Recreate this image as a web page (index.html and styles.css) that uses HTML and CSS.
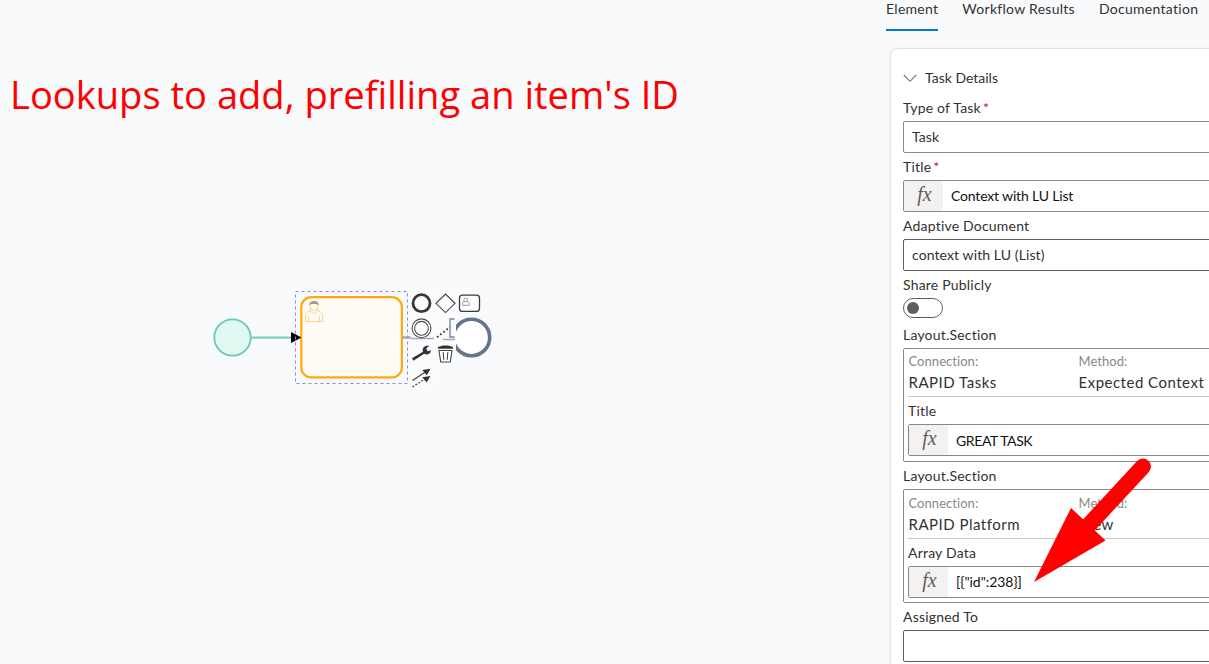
FILE: index.html
```html
<!DOCTYPE html>
<html lang="en">
<head>
<meta charset="utf-8">
<title>Workflow designer</title>
<link rel="stylesheet" href="styles.css">
</head>
<body>
<div class="app">
  <main class="canvas">
    <h1 class="headline">Lookups to add, prefilling an item's ID</h1>
    <svg class="diagram" width="300" height="110" viewBox="205 285 300 110">
      <circle cx="232.5" cy="337.5" r="18.2" fill="#e0f8f2" stroke="#68c9b5" stroke-width="1.8"/>
      <path d="M251 337.6H293" stroke="#7fd0c0" stroke-width="2.2"/>
      <path d="M401 337.5H460" stroke="#747d91" stroke-width="2"/>
      <rect x="301.3" y="297.2" width="100.6" height="80.2" rx="10" fill="#fffcf5" stroke="#ffa812" stroke-width="2.2"/>
      <path d="M291 332L301.500 337.500L291 343Z" fill="#000"/>
      <rect x="295.500" y="291.500" width="112" height="92" fill="none" stroke="#8c86f5" stroke-dasharray="3 3"/>
      <g fill="none" stroke="#ffd08a" stroke-width="1">
        <path d="M310.500 310.500C307 312 305.500 312.500 305.500 316V321.500H322.500V316C322.500 312.500 321 312 317.500 310.500C317 314 311 314 310.500 310.500ZM308.700 321.500V316M319.500 321.500V316M310.500 310.500V308.500M317.500 310.500V308.500"/>
        <circle cx="314" cy="305.800" r="4.300"/>
      </g>
      <path d="M309.300 305C309 299.600 319 299.600 318.700 305C317 303.800 312 303.300 309.300 305Z" fill="#a69883"/>
      <circle cx="471.500" cy="337.500" r="18.200" fill="#fff" stroke="#64748b" stroke-width="3.600"/>
      <path d="M410 292H434V389H410ZM434 292H480V314H456V363H434Z" fill="#fafbfd"/>
      <path d="M402 337.500H411M411 338.500H434M443 339.500H455" stroke="#a3a8b4" stroke-width="1.300"/>
      <circle cx="421.500" cy="303.200" r="8.500" fill="none" stroke="#373737" stroke-width="2.800"/>
      <path d="M445.500 294L455 303.300L445.500 312.600L436 303.300Z" fill="#fff" stroke="#414141" stroke-width="1.100"/>
      <rect x="459.500" y="295.200" width="20" height="16.200" rx="3" fill="#fdfdfd" stroke="#3c3c40" stroke-width="1.300"/>
      <path d="M464.200 301.500C462.500 302 462.300 303 462.300 305.300H469.300C469.300 303 469 302 467.300 301.500" fill="none" stroke="#85858b" stroke-width=".8"/>
      <circle cx="465.700" cy="300" r="1.900" fill="none" stroke="#85858b" stroke-width=".8"/>
      <circle cx="421.500" cy="328.300" r="9.400" fill="#fff" stroke="#49494d" stroke-width="1.100"/>
      <circle cx="421.500" cy="328.300" r="6.900" fill="#fff" stroke="#49494d" stroke-width="1.100"/>
      <path d="M437 337.200L450 327" stroke="#333" stroke-width="1.800" stroke-dasharray="1.700 2.300"/>
      <path d="M454.500 319H450V337H454.500" fill="none" stroke="#71819b" stroke-width="1.300"/>
      <path d="M412 358.200L423 351.800C421.600 347.800 425 344.800 429.200 345.900L426.300 348.200L427.500 351.200L431 350.200C430.500 354.500 426.700 355.300 424.200 353.800L413.500 360.800Z" fill="#333"/>
      <path d="M438 348.700V347L443 345.400H448L453 347V348.700Z" fill="#333"/>
      <path d="M439 350.500H452L450.300 362H440.700Z" fill="#fff" stroke="#444" stroke-width="1.100"/>
      <path d="M443.200 352.200L443.800 359.800M447.800 352.200L447.200 359.800" stroke="#444" stroke-width="1.100"/>
      <path d="M412.500 380.500L425 372.300" stroke="#444" stroke-width="1.200"/>
      <path d="M412.500 387L425 379" stroke="#444" stroke-width="1.200" stroke-dasharray="2 1.500"/>
      <path d="M430.500 368.700L426.700 375.200L422.300 369.900ZM430.500 376L426.700 382.500L422.300 377.200Z" fill="#333"/>
    </svg>
  </main>
  <aside class="side">
    <nav class="tabs">
      <a class="tab active">Element</a>
      <a class="tab">Workflow Results</a>
      <a class="tab">Documentation</a>
    </nav>
    <section class="card">
      <header class="card-head">
        <svg width="14" height="9" viewBox="0 0 14 9"><path d="M.8 1L7 7.300L13.200 1" fill="none" stroke="#777" stroke-width="1.100"/></svg>
        <span>Task Details</span>
      </header>
      <div class="label">Type of Task<span class="req">*</span></div>
      <div class="input">Task</div>
      <div class="label">Title<span class="req">*</span></div>
      <div class="input"><span class="fx">fx</span><span class="value">Context with LU List</span></div>
      <div class="label">Adaptive Document</div>
      <div class="input dark">context with LU (List)</div>
      <div class="label">Share Publicly</div>
      <div class="toggle"><span class="knob"></span></div>
      <div class="label">Layout.Section</div>
      <div class="box">
        <div class="meta">
          <div class="col"><span class="key">Connection:</span><span class="val">RAPID Tasks</span></div>
          <div class="col"><span class="key">Method:</span><span class="val">Expected Context</span></div>
        </div>
        <div class="label">Title</div>
        <div class="input"><span class="fx">fx</span><span class="value caps">GREAT TASK</span></div>
      </div>
      <div class="label">Layout.Section</div>
      <div class="box second">
        <div class="meta">
          <div class="col"><span class="key">Connection:</span><span class="val">RAPID Platform</span></div>
          <div class="col"><span class="key">Method:</span><span class="val">View</span></div>
        </div>
        <div class="label">Array Data</div>
        <div class="input"><span class="fx">fx</span><span class="value code">[{"id":238}]</span></div>
      </div>
      <div class="label">Assigned To</div>
      <div class="input dark"></div>
    </section>
  </aside>
  <svg class="arrow" width="130" height="135" viewBox="1025 455 130 135">
    <path d="M1143 466.500L1087 527" stroke="#f00" stroke-width="16" stroke-linecap="round"/>
    <path d="M1034 582L1071 508L1105.500 540.500Z" fill="#f00"/>
  </svg>
</div>
</body>
</html>
```

FILE: styles.css
```css
* { box-sizing: border-box; }
body {
  margin: 0;
  background: #f9fafc;
  color: #323130;
  font: 14px/20px Lato, "Liberation Sans", sans-serif;
}
.app { position: relative; display: flex; width: 1209px; height: 664px; overflow: hidden; }
.canvas { width: 886px; flex: none; display: flex; flex-direction: column; padding-top: 64px; }
.headline {
  margin: 0 0 0 10px;
  color: #f00;
  font: 400 39px/60px "Open Sans", "Noto Sans", sans-serif;
  white-space: nowrap;
  width: max-content;
  transform: scaleX(.977);
  transform-origin: left;
}
.diagram { margin: 161px 0 0 205px; display: block; }
.side { flex: none; width: 340px; }
.tabs { display: flex; gap: 24px; height: 31px; }
.tab { height: 31px; line-height: 17px; white-space: nowrap; letter-spacing: .28px; }
.active { border-bottom: 2px solid #0078d4; }
.card {
  margin: 17px 0 0 4px;
  height: 640px;
  padding: 15px 0 0 12px;
  background: #fff;
  border: 1px solid #e1e2e4;
  border-radius: 8px;
  box-shadow: 0 1px 4px rgba(0, 0, 0, .08);
}
.card-head { display: flex; align-items: center; gap: 8px; height: 28px; margin-bottom: 2px; line-height: 28px; }
.label { height: 27px; line-height: 27px; letter-spacing: .2px; white-space: nowrap; }
.req { color: #a4262c; margin-left: 2px; }
.input {
  display: flex;
  align-items: center;
  height: 32px;
  padding-left: 8px;
  border: 1px solid #8a8886;
  border-radius: 2px;
  background: #fff;
  letter-spacing: .1px;
}
.input:has(.fx) { padding-left: 0; }
.dark { border-color: #605e5c; }
.fx {
  width: 39px;
  height: 30px;
  padding-left: 2px;
  background: #f3f2f1;
  color: #605e5c;
  text-align: center;
  font: italic 20px/27px "Liberation Serif", serif;
}
.value { margin-left: 8px; color: #111; letter-spacing: -.17px; }
.caps { letter-spacing: -.4px; padding-top: 1px; }
.code { letter-spacing: -.05px; }
.toggle {
  display: flex;
  align-items: center;
  width: 40px;
  height: 20px;
  margin-bottom: 3px;
  padding-left: 3px;
  border: 1px solid #605e5c;
  border-radius: 10px;
}
.knob { width: 12px; height: 12px; border-radius: 50%; background: #605e5c; }
.box { height: 114px; padding: 3px 0 0 4px; border: 1px solid #8a8886; border-radius: 2px; }
.meta { display: flex; height: 45px; border-bottom: 1px solid #c8c6c4; }
.col { display: flex; flex-direction: column; width: 170px; padding-left: .5px; flex: none; white-space: nowrap; }
.key { font-size: 13px; line-height: 18px; color: #8a8886; letter-spacing: .05px; }
.val { font-size: 15px; line-height: 24px; letter-spacing: .5px; }
.second { padding-top: 4px; }
.arrow { position: absolute; left: 1025px; top: 455px; }
```
